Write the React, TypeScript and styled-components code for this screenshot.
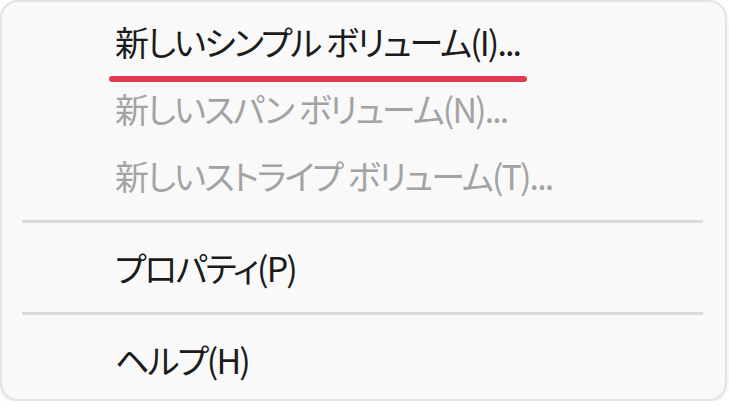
import styled, { createGlobalStyle } from "styled-components";

const Global = createGlobalStyle`
  html, body {
    margin: 0;
    padding: 0;
    background: #ffffff;
  }
`;

const Menu = styled.div`
  box-sizing: border-box;
  width: 727px;
  height: 401px;
  margin: 0;
  padding: 6px 0 0;
  background: #f9f9f9;
  border: 2px solid #e3e3e3;
  border-radius: 18px;
  box-shadow: 0 2px 4px rgba(0, 0, 0, 0.08);
  display: flex;
  flex-direction: column;
  font-family: "Noto Sans CJK JP", "Noto Sans", sans-serif;
  font-feature-settings: "palt";
`;

const Item = styled.div<{ $disabled?: boolean }>`
  position: relative;
  height: 67px;
  display: flex;
  align-items: center;
  padding-left: 113px;
  font-size: 34px;
  letter-spacing: -1.9px;
  color: ${(p) => (p.$disabled ? "#a3a3a3" : "#1b1b1b")};
  white-space: nowrap;
`;

const Mark = styled.span`
  position: absolute;
  left: 107px;
  width: 418px;
  bottom: -7px;
  height: 6px;
  border-radius: 3px;
  background: #e23a52;
`;

const Separator = styled.div`
  height: 3px;
  margin: 11px 22px 11px 20px;
  background: #dadada;
`;

export default function App() {
  return (
    <>
      <Global />
      <Menu>
        <Item>
          新しいシンプル ボリューム(I)...
          <Mark />
        </Item>
        <Item $disabled>新しいスパン ボリューム(N)...</Item>
        <Item $disabled>新しいストライプ ボリューム(T)...</Item>
        <Separator />
        <Item>プロパティ(P)</Item>
        <Separator />
        <Item>ヘルプ(H)</Item>
      </Menu>
    </>
  );
}
